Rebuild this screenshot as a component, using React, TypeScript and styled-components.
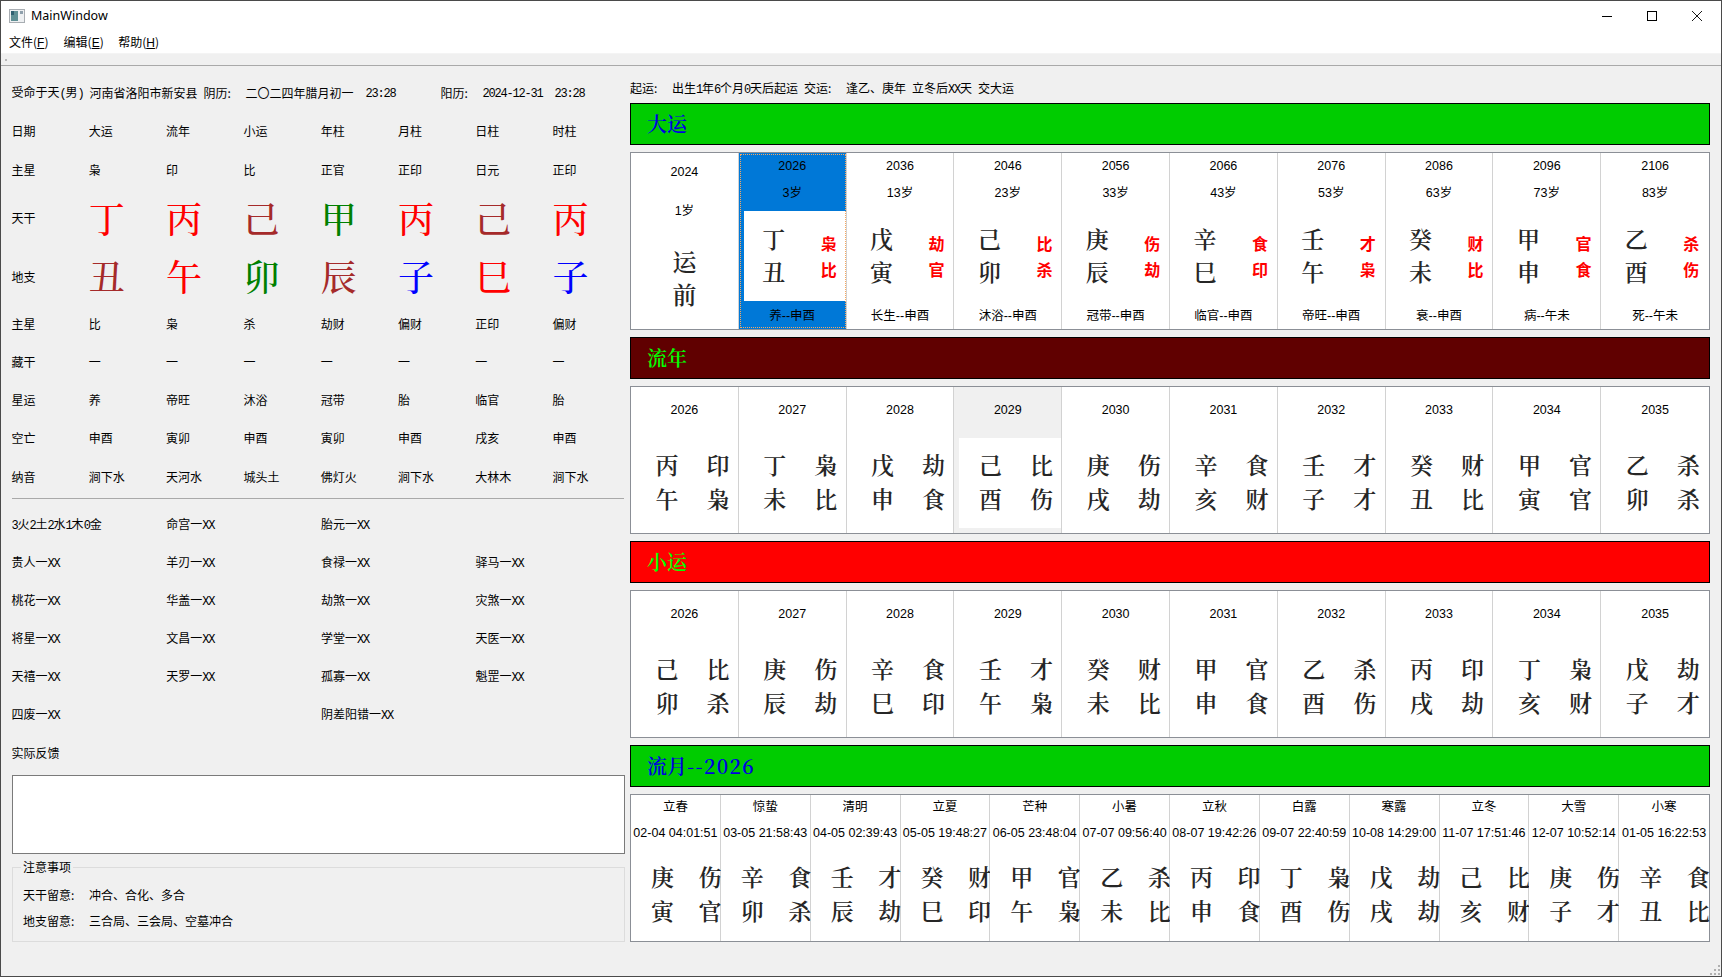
import styled, { createGlobalStyle } from "styled-components";

const sans = `"Noto Sans CJK SC", sans-serif`;
const ui = `"Liberation Sans", "Noto Sans CJK SC", sans-serif`;
const serif = `"Noto Serif CJK SC", "Liberation Serif", "Noto Sans CJK SC", serif`;

const GlobalStyle = createGlobalStyle`
  html, body {
    margin: 0;
    padding: 0;
    background: #f0f0f0;
  }
  * {
    box-sizing: border-box;
  }
`;

const Win = styled.div`
  position: relative;
  width: 1722px;
  height: 977px;
  border: 1px solid #4a4a4a;
  background: #f0f0f0;
  font-family: ${sans};
  font-size: 12px;
  color: #000;
  overflow: hidden;
`;

const TitleBar = styled.div`
  display: flex;
  align-items: center;
  height: 29px;
  background: #fff;
  padding-left: 8px;
`;
const TitleText = styled.span`
  font-family: "Noto Sans", sans-serif;
  font-size: 12.5px;
  margin-left: 6px;
`;
const WinBtns = styled.div`
  display: flex;
  margin-left: auto;
  padding-right: 2px;
`;
const WinBtn = styled.div`
  width: 45px;
  height: 29px;
  display: flex;
  align-items: center;
  justify-content: center;
`;

const MenuBar = styled.div`
  display: flex;
  height: 24px;
  background: #fff;
  border-bottom: 1px solid #f4f4f4;
  align-items: center;
`;
const MenuItem = styled.span`
  padding: 0 8px;
  width: 54.6px;
  white-space: nowrap;
  u {
    font-family: "Liberation Sans", sans-serif;
  }
`;
const ToolBar = styled.div`
  height: 12px;
  border-bottom: 1px solid #a9a9a9;
  display: flex;
  align-items: center;
  padding-left: 4px;
`;
const Grip = styled.span`
  width: 2px;
  height: 2px;
  background: #b8b8b8;
`;

const Main = styled.div`
  display: flex;
`;

/* ---- left side ---- */
const Left = styled.div`
  width: 629px;
  padding-top: 7px;
`;
const Mono = styled.span`
  font-family: "Liberation Mono", monospace;
  font-size: 12px;
  letter-spacing: -1.2px;
`;
const HeadRow = styled.div`
  display: flex;
  align-items: center;
  height: 38px;
  padding-left: 10.5px;
`;
const HeadField = styled.span<{ $w: number }>`
  width: ${(p) => p.$w}px;
  white-space: nowrap;
`;
const PillarRow = styled.div<{ $h: number; $lift?: number }>`
  display: grid;
  grid-template-columns: repeat(8, 77.3px);
  align-items: center;
  height: ${(p) => p.$h}px;
  padding: 0 0 ${(p) => p.$lift ?? 0}px 10.5px;
  white-space: nowrap;
`;
const BigChar = styled.span<{ $c: string }>`
  font-family: ${serif};
  font-size: 36px;
  font-weight: 500;
  line-height: 40px;
  color: ${(p) => p.$c};
`;
const Divider = styled.div`
  height: 1px;
  background: #a9a9a9;
  margin: 1px 6px 0 11px;
`;
const TagGrid = styled.div`
  display: grid;
  grid-template-columns: repeat(4, 154.7px);
  grid-auto-rows: 38px;
  align-items: center;
  padding: 6px 0 0 10.5px;
  white-space: nowrap;
`;
const FeedbackBox = styled.div`
  height: 79px;
  margin: 4px 5px 0 11px;
  background: #fff;
  border: 1px solid #7a7a7a;
`;
const NoteGroup = styled.fieldset`
  margin: 5px 5px 0 11px;
  padding: 6px 10px 0;
  height: 83px;
  border: 1px solid #dcdcdc;
`;
const NoteTitle = styled.legend`
  margin-left: -2px;
  padding: 0 2px;
  line-height: 16px;
`;
const NoteRow = styled.div`
  display: flex;
  height: 26px;
  align-items: center;
`;
const NoteLabel = styled.span`
  width: 66px;
`;

/* ---- right side ---- */
const Right = styled.div`
  width: 1080px;
  display: flex;
  flex-direction: column;
  gap: 7px;
  padding-top: 11px;
`;
const InfoLine = styled.div`
  display: flex;
  align-items: center;
  height: 21px;
  margin-bottom: -2px;
  white-space: nowrap;
`;
const Banner = styled.div<{ $bg: string; $fg: string }>`
  height: 42px;
  display: flex;
  align-items: center;
  padding: 0 0 2px 16px;
  background: ${(p) => p.$bg};
  color: ${(p) => p.$fg};
  border: 1px solid #000;
  font-family: ${serif};
  font-size: 20px;
  font-weight: 600;
`;
const BannerYear = styled.span`
  letter-spacing: 1.3px;
`;
const Table = styled.div<{ $cols: number; $h: number }>`
  display: grid;
  grid-template-columns: repeat(${(p) => p.$cols}, 1fr);
  grid-template-rows: minmax(0, 1fr);
  height: ${(p) => p.$h}px;
  background: #fff;
  border: 1px solid #8b8f96;
`;
const Cell = styled.div<{ $state?: "selected" | "hover" }>`
  position: relative;
  min-width: 0;
  display: flex;
  flex-direction: column;
  align-items: stretch;
  text-align: center;
  font-family: ${ui};
  font-size: 12.5px;
  white-space: nowrap;
  border-right: 1px solid #d2d2d2;
  &:last-child {
    border-right: none;
  }
  background: ${(p) =>
    p.$state === "selected" ? "#0078d7" : p.$state === "hover" ? "#f0f0f0" : "#fff"};
  ${(p) => p.$state === "selected" && "outline: 1px dotted #f8a860; outline-offset: -2px;"}
`;
const Caption = styled.div<{ $h: number; $drop?: number }>`
  height: ${(p) => p.$h}px;
  line-height: ${(p) => p.$h - (p.$drop ?? 0)}px;
  padding-top: ${(p) => p.$drop ?? 0}px;
  flex: none;
`;
const Pair = styled.div<{ $h?: number; $indent?: number; $gap?: number }>`
  height: ${(p) => p.$h ?? 90}px;
  margin-left: ${(p) => p.$indent ?? 5}px;
  margin-top: ${(p) => p.$gap ?? 0}px;
  flex: none;
  background: #fff;
  display: flex;
  align-items: center;
  text-align: center;
`;
const Stack = styled.div<{ $w: number; $lh: number; $size?: number; $lift?: number; $gap?: number }>`
  flex: none;
  width: ${(p) => p.$w}px;
  font-family: ${serif};
  font-size: ${(p) => p.$size ?? 23}px;
  font-weight: 600;
  line-height: ${(p) => p.$lh}px;
  padding-bottom: ${(p) => p.$lift ?? 0}px;
  margin-top: ${(p) => p.$gap ?? 0}px;
  color: #262626;
  white-space: pre-line;
`;
const GodStack = styled.div<{ $w: number }>`
  flex: none;
  width: ${(p) => p.$w}px;
  font-family: ${sans};
  font-size: 16px;
  font-weight: 700;
  line-height: 26px;
  color: #f00;
  white-space: pre-line;
`;
const ResizeGrip = styled.svg`
  position: absolute;
  right: 0;
  bottom: 0;
`;

const pillarColors: [string, string][] = [
  ["丁", "#f00"],
  ["丙", "#f00"],
  ["己", "#a52a2a"],
  ["甲", "#008000"],
  ["丙", "#f00"],
  ["己", "#a52a2a"],
  ["丙", "#f00"],
];
const branchColors: [string, string][] = [
  ["丑", "#a52a2a"],
  ["午", "#f00"],
  ["卯", "#008000"],
  ["辰", "#a52a2a"],
  ["子", "#00f"],
  ["巳", "#f00"],
  ["子", "#00f"],
];
const textRows: { h: number; cells: string[] }[] = [
  { h: 38, cells: ["日期", "大运", "流年", "小运", "年柱", "月柱", "日柱", "时柱"] },
  { h: 40, cells: ["主星", "枭", "印", "比", "正官", "正印", "日元", "正印"] },
];
const lowerRows: { h: number; cells: string[] }[] = [
  { h: 40, cells: ["主星", "比", "枭", "杀", "劫财", "偏财", "正印", "偏财"] },
  { h: 36, cells: ["藏干", "一", "一", "一", "一", "一", "一", "一"] },
  { h: 40, cells: ["星运", "养", "帝旺", "沐浴", "冠带", "胎", "临官", "胎"] },
  { h: 36, cells: ["空亡", "申酉", "寅卯", "申酉", "寅卯", "申酉", "戌亥", "申酉"] },
  { h: 42, cells: ["纳音", "涧下水", "天河水", "城头土", "佛灯火", "涧下水", "大林木", "涧下水"] },
];
const tags: string[] = [
  "", "命宫", "胎元", "",
  "贵人", "羊刃", "食禄", "驿马",
  "桃花", "华盖", "劫煞", "灾煞",
  "将星", "文昌", "学堂", "天医",
  "天禧", "天罗", "孤寡", "魁罡",
  "四废", "", "阴差阳错", "",
];

const dayun = [
  ["2026", "3岁", "丁\n丑", "枭\n比", "养--申酉"],
  ["2036", "13岁", "戊\n寅", "劫\n官", "长生--申酉"],
  ["2046", "23岁", "己\n卯", "比\n杀", "沐浴--申酉"],
  ["2056", "33岁", "庚\n辰", "伤\n劫", "冠带--申酉"],
  ["2066", "43岁", "辛\n巳", "食\n印", "临官--申酉"],
  ["2076", "53岁", "壬\n午", "才\n枭", "帝旺--申酉"],
  ["2086", "63岁", "癸\n未", "财\n比", "衰--申酉"],
  ["2096", "73岁", "甲\n申", "官\n食", "病--午未"],
  ["2106", "83岁", "乙\n酉", "杀\n伤", "死--午未"],
];
const liunian = [
  ["2026", "丙\n午", "印\n枭"],
  ["2027", "丁\n未", "枭\n比"],
  ["2028", "戊\n申", "劫\n食"],
  ["2029", "己\n酉", "比\n伤"],
  ["2030", "庚\n戌", "伤\n劫"],
  ["2031", "辛\n亥", "食\n财"],
  ["2032", "壬\n子", "才\n才"],
  ["2033", "癸\n丑", "财\n比"],
  ["2034", "甲\n寅", "官\n官"],
  ["2035", "乙\n卯", "杀\n杀"],
];
const xiaoyun = [
  ["2026", "己\n卯", "比\n杀"],
  ["2027", "庚\n辰", "伤\n劫"],
  ["2028", "辛\n巳", "食\n印"],
  ["2029", "壬\n午", "才\n枭"],
  ["2030", "癸\n未", "财\n比"],
  ["2031", "甲\n申", "官\n食"],
  ["2032", "乙\n酉", "杀\n伤"],
  ["2033", "丙\n戌", "印\n劫"],
  ["2034", "丁\n亥", "枭\n财"],
  ["2035", "戊\n子", "劫\n才"],
];
const liuyue = [
  ["立春", "02-04 04:01:51", "庚\n寅", "伤\n官"],
  ["惊蛰", "03-05 21:58:43", "辛\n卯", "食\n杀"],
  ["清明", "04-05 02:39:43", "壬\n辰", "才\n劫"],
  ["立夏", "05-05 19:48:27", "癸\n巳", "财\n印"],
  ["芒种", "06-05 23:48:04", "甲\n午", "官\n枭"],
  ["小暑", "07-07 09:56:40", "乙\n未", "杀\n比"],
  ["立秋", "08-07 19:42:26", "丙\n申", "印\n食"],
  ["白露", "09-07 22:40:59", "丁\n酉", "枭\n伤"],
  ["寒露", "10-08 14:29:00", "戊\n戌", "劫\n劫"],
  ["立冬", "11-07 17:51:46", "己\n亥", "比\n财"],
  ["大雪", "12-07 10:52:14", "庚\n子", "伤\n才"],
  ["小寒", "01-05 16:22:53", "辛\n丑", "食\n比"],
];

const YearTable = ({ rows, hover }: { rows: string[][]; hover?: string }) => (
  <Table $cols={10} $h={148}>
    {rows.map(([year, stems, gods]) => (
      <Cell key={year} $state={year === hover ? "hover" : undefined}>
        <Caption $h={46}>{year}</Caption>
        <Pair $gap={5}>
          <Stack $w={62} $lh={34} $lift={2}>{stems}</Stack>
          <Stack $w={40} $lh={34} $lift={2}>{gods}</Stack>
        </Pair>
      </Cell>
    ))}
  </Table>
);

const App = () => (
  <Win>
    <GlobalStyle />
    <TitleBar>
      <svg width="16" height="16" viewBox="0 0 16 16">
        <rect x="0.5" y="1.5" width="15" height="13" fill="#eef0f2" stroke="#a8adb2" />
        <rect x="2" y="3" width="7" height="10" fill="#5f8f94" />
        <rect x="2" y="3" width="3" height="4" fill="#2f5f70" />
        <rect x="11" y="3" width="3" height="3" fill="#8fa0ac" />
      </svg>
      <TitleText>MainWindow</TitleText>
      <WinBtns>
        <WinBtn>
          <svg width="10" height="10" viewBox="0 0 10 10">
            <path d="M0 5.5h10" stroke="#000" />
          </svg>
        </WinBtn>
        <WinBtn>
          <svg width="10" height="10" viewBox="0 0 10 10">
            <rect x="0.5" y="0.5" width="9" height="9" fill="none" stroke="#000" />
          </svg>
        </WinBtn>
        <WinBtn>
          <svg width="10" height="10" viewBox="0 0 10 10">
            <path d="M0 0l10 10M10 0L0 10" stroke="#000" strokeWidth="0.9" />
          </svg>
        </WinBtn>
      </WinBtns>
    </TitleBar>
    <MenuBar>
      <MenuItem>文件(<u>F</u>)</MenuItem>
      <MenuItem>编辑(<u>E</u>)</MenuItem>
      <MenuItem>帮助(<u>H</u>)</MenuItem>
    </MenuBar>
    <ToolBar>
      <Grip />
    </ToolBar>
    <Main>
      <Left>
        <HeadRow>
          <HeadField $w={78}>受命于天<Mono>(</Mono>男<Mono>)</Mono></HeadField>
          <HeadField $w={114}>河南省洛阳市新安县</HeadField>
          <HeadField $w={42}>阴历:</HeadField>
          <HeadField $w={120}>二〇二四年腊月初一</HeadField>
          <HeadField $w={75}><Mono>23:28</Mono></HeadField>
          <HeadField $w={42}>阳历:</HeadField>
          <HeadField $w={72}><Mono>2024-12-31</Mono></HeadField>
          <HeadField $w={40}><Mono>23:28</Mono></HeadField>
        </HeadRow>
        {textRows.map((row) => (
          <PillarRow key={row.cells.join()} $h={row.h}>
            {row.cells.map((c, i) => <span key={i}>{c}</span>)}
          </PillarRow>
        ))}
        <PillarRow $h={60} $lift={3}>
          <span>天干</span>
          {pillarColors.map(([ch, color], i) => <BigChar key={i} $c={color}>{ch}</BigChar>)}
        </PillarRow>
        <PillarRow $h={54}>
          <span>地支</span>
          {branchColors.map(([ch, color], i) => <BigChar key={i} $c={color}>{ch}</BigChar>)}
        </PillarRow>
        {lowerRows.map((row) => (
          <PillarRow key={row.cells.join()} $h={row.h}>
            {row.cells.map((c, i) => <span key={i}>{c}</span>)}
          </PillarRow>
        ))}
        <Divider />
        <TagGrid>
          {tags.map((t, i) =>
            i === 0 ? (
              <span key={i}><Mono>3</Mono>火<Mono>2</Mono>土<Mono>2</Mono>水<Mono>1</Mono>木<Mono>0</Mono>金</span>
            ) : t ? (
              <span key={i}>{t}一<Mono>XX</Mono></span>
            ) : (
              <span key={i} />
            )
          )}
          <span>实际反馈</span>
        </TagGrid>
        <FeedbackBox />
        <NoteGroup>
          <NoteTitle>注意事项</NoteTitle>
          <NoteRow>
            <NoteLabel>天干留意:</NoteLabel>
            <span>冲合、合化、多合</span>
          </NoteRow>
          <NoteRow>
            <NoteLabel>地支留意:</NoteLabel>
            <span>三合局、三会局、空墓冲合</span>
          </NoteRow>
        </NoteGroup>
      </Left>
      <Right>
        <InfoLine>
          <HeadField $w={42}>起运:</HeadField>
          <HeadField $w={132}>出生<Mono>1</Mono>年<Mono>6</Mono>个月<Mono>0</Mono>天后起运</HeadField>
          <HeadField $w={42}>交运:</HeadField>
          <HeadField $w={66}>逢乙、庚年</HeadField>
          <HeadField $w={66}>立冬后<Mono>XX</Mono>天</HeadField>
          <HeadField $w={40}>交大运</HeadField>
        </InfoLine>
        <Banner $bg="#00cc00" $fg="#0000e0">大运</Banner>
        <Table $cols={10} $h={178}>
          <Cell>
            <Caption $h={38}>2024</Caption>
            <Caption $h={40}>1岁</Caption>
            <Stack $w={107} $size={24} $lh={33} $gap={13}>{"运\n前"}</Stack>
          </Cell>
          {dayun.map(([year, age, stems, gods, stage], i) => (
            <Cell key={year} $state={i === 0 ? "selected" : undefined}>
              <Caption $h={26}>{year}</Caption>
              <Caption $h={28}>{age}</Caption>
              <Pair $gap={4} $indent={i === 0 ? 5 : 0}>
                <Stack $w={i === 0 ? 60 : 70} $lh={33} $lift={2}>{stems}</Stack>
                <GodStack $w={i === 0 ? 50 : 40}>{gods}</GodStack>
              </Pair>
              <Caption $h={28} $drop={2}>{stage}</Caption>
            </Cell>
          ))}
        </Table>
        <Banner $bg="#600000" $fg="#00ff00">流年</Banner>
        <YearTable rows={liunian} hover="2029" />
        <Banner $bg="#ff0000" $fg="#00ff00">小运</Banner>
        <YearTable rows={xiaoyun} />
        <Banner $bg="#00cc00" $fg="#0000e0">流月<BannerYear>--2026</BannerYear></Banner>
        <Table $cols={12} $h={148}>
          {liuyue.map(([term, time, stems, gods]) => (
            <Cell key={term}>
              <Caption $h={24}>{term}</Caption>
              <Caption $h={28}>{time}</Caption>
              <Pair $h={68} $indent={0} $gap={13}>
                <Stack $w={63} $lh={34}>{stems}</Stack>
                <Stack $w={32} $lh={34}>{gods}</Stack>
              </Pair>
            </Cell>
          ))}
        </Table>
      </Right>
    </Main>
    <ResizeGrip width="12" height="12" viewBox="0 0 12 12">
      <g fill="#b0b0b0">
        <rect x="9" y="1" width="2" height="2" />
        <rect x="5" y="5" width="2" height="2" />
        <rect x="9" y="5" width="2" height="2" />
        <rect x="1" y="9" width="2" height="2" />
        <rect x="5" y="9" width="2" height="2" />
        <rect x="9" y="9" width="2" height="2" />
      </g>
    </ResizeGrip>
  </Win>
);

export default App;
